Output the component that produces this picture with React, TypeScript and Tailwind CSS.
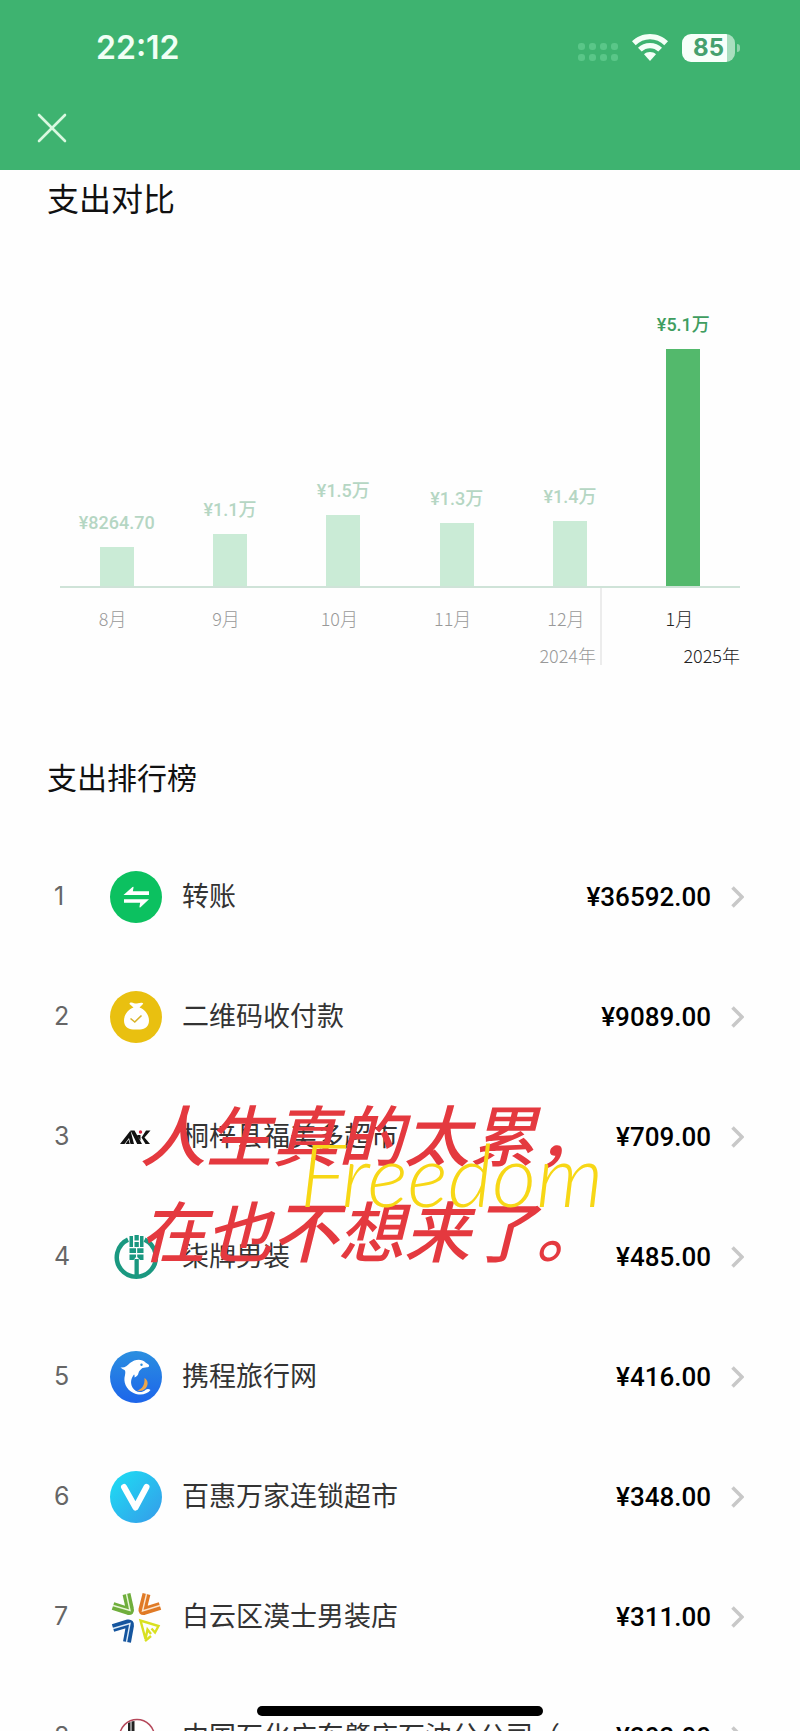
import React from 'react';
import { X } from 'lucide-react';

interface MonthSpend {
  month: string;
  label: string;
  height: number;
  active?: boolean;
}

interface RankItem {
  name: string;
  amount: string;
  icon: React.ReactNode;
}

const MONTHS: MonthSpend[] = [
  { month: '8月', label: '¥8264.70', height: 39 },
  { month: '9月', label: '¥1.1万', height: 52 },
  { month: '10月', label: '¥1.5万', height: 71 },
  { month: '11月', label: '¥1.3万', height: 63 },
  { month: '12月', label: '¥1.4万', height: 65 },
  { month: '1月', label: '¥5.1万', height: 237, active: true },
];

const TransferIcon = () => (
  <svg viewBox="0 0 52 52" className="size-[52px]">
    <circle cx="26" cy="26" r="26" fill="#0cc160" />
    <path d="M13.500 24 22.500 16Q23.800 15.200 23.500 16.800L22.800 20.300H39V24ZM39 28.200 30.500 36.300Q29.200 37 29.500 35.500L30.200 31.800H14V28.200Z" fill="#fff" />
  </svg>
);

const MoneyBagIcon = () => (
  <svg viewBox="0 0 52 52" className="size-[52px]">
    <circle cx="26" cy="26" r="26" fill="#e9c010" />
    <path d="M19.500 13C19.500 11 22.500 11.500 24 12.200Q26 13 28 12.200C30 11.500 34 11.300 33 13L29.500 16.500C35.500 18.500 39 24.500 39 29.500C39 35 35.500 38.500 30 38.500H23C17.500 38.500 14 35 14 29.500C14 24.500 17.500 18.500 23.500 16.500Z" fill="#fff" />
    <path d="M20.500 27.500 24.800 31 31.500 24.500" fill="none" stroke="#d9b32a" strokeWidth="1.600" />
  </svg>
);

const AxkIcon = () => (
  <svg viewBox="0 0 52 52" className="size-[52px]">
    <path d="M10 33 20.500 19.500 24 33H20.500L19 27 14.500 33Z" fill="#111" />
    <path d="M15.500 33 18.500 28.500 19.800 33Z" fill="#111" />
    <path d="M20.500 19.500H24.500L32 33H27.200ZM27.500 24H30.500V29.500L27.500 25ZM36 19.500H40.500L34.500 26.500 40 33H35.500L31.500 26.500Z" fill="#111" />
    <circle cx="30.500" cy="21" r="1.700" fill="#d3263f" />
  </svg>
);

const WheatIcon = () => (
  <svg viewBox="0 0 52 52" className="size-[52px]">
    <path d="M18 8.600A19.500 19.500 0 1 0 34.600 8.600" fill="none" stroke="#1a9880" strokeWidth="4.500" />
    <path d="M19.500 5H23V16H19.500ZM24.500 4H28.800V9.500H24.500ZM30 5H33.500V16H30ZM24.500 11H28.800V16H24.500ZM19.500 17.300H26V22H19.500ZM27.200 17.300H33.500V22H27.200ZM19.500 23.500H26V26L23.500 29H19.500ZM27.200 23.500H33.500V29H30L27.200 26ZM24.500 28H28.800V46H24.500Z" fill="#1a9880" />
  </svg>
);

const DolphinIcon = () => (
  <svg viewBox="0 0 52 52" className="size-[52px]">
    <defs>
      <linearGradient id="sea" x1="0" y1="0" x2="0" y2="1">
        <stop offset="0" stopColor="#2b8fe0" />
        <stop offset="1" stopColor="#1d65ea" />
      </linearGradient>
    </defs>
    <circle cx="26" cy="26" r="26" fill="url(#sea)" />
    <path d="M34.500 27C38.500 29.500 38.500 34 35.500 37.500C33 40 29.500 40.500 27 39.500C32 38.500 35 34 34.500 27Z" fill="#eda64b" />
    <path d="M10.500 16.500C15 17 17 15 20 12C25 7.800 32 7.500 35.500 11.500L38.500 13.500C39.800 14.500 39 16.500 37 16.200L32.500 17C31 18.500 28.800 19.500 28.500 22C28.300 24.500 26.500 25.500 24.500 26.500C24.800 24.800 24.500 23.800 24 23.500C21 27 20 32 22.500 36.500C25 41 31 43 36 38.500Q38.500 37.500 40.500 39C37 43.500 30 45 23.500 42C16 38.500 13 31 15 24C15.500 21.500 15.500 20 14.500 19Q12.500 18 10.500 16.500Z" fill="#fff" />
    <circle cx="31.500" cy="13.800" r="1.200" fill="#2b8fe0" />
  </svg>
);

const VIcon = () => (
  <svg viewBox="0 0 52 52" className="size-[52px]">
    <defs>
      <linearGradient id="cyan" x1="0" y1="0" x2="1" y2="1">
        <stop offset="0.100" stopColor="#1fd9f3" />
        <stop offset="0.900" stopColor="#33a1ea" />
      </linearGradient>
    </defs>
    <circle cx="26" cy="26" r="26" fill="url(#cyan)" />
    <path d="M14 16 25.500 36.500 36.500 16" fill="none" stroke="#fff" strokeWidth="6" strokeLinecap="round" strokeLinejoin="round" />
  </svg>
);

const PinwheelIcon = () => (
  <svg viewBox="0 0 52 52" className="size-[52px]" fill="none">
    <path d="M16.500 3 20 18.500Q20.500 20.500 18.500 20L3 15" stroke="#6fae3c" strokeWidth="8" />
    <path d="M16.500 3 20 19.500 3 14.500" stroke="#e9f7d8" strokeWidth="1.400" />
    <path d="M36.500 3 32.500 18.500Q32 20.500 34 20L50 15" stroke="#e07a26" strokeWidth="8" />
    <path d="M36.500 3 32.500 20 50 14.500" stroke="#fbe6cf" strokeWidth="1.400" />
    <path d="M3 37 18 32.500Q20.500 32 20 34.500L17 51" stroke="#15559e" strokeWidth="8" />
    <path d="M3 37.500 20 32.500 16.500 51" stroke="#dcebf8" strokeWidth="1.400" />
    <path d="M41 43 37.500 38.500 35.500 48 30.500 29.500 48.500 35 45 41.500 41.500 37.500" stroke="#d9e021" strokeWidth="2.400" />
    <path d="M35 50 41 45" stroke="#d9e021" strokeWidth="2.400" />
  </svg>
);

const OilIcon = () => (
  <svg viewBox="0 0 52 52" className="size-[52px]">
    <circle cx="27" cy="26" r="17.500" fill="#fff" stroke="#b5485a" strokeWidth="1.500" />
    <path d="M18 12 20.500 11V40H18ZM21.500 10.500 24.500 10V40H21.500Z" fill="#222" />
    <path d="M26 25.500H41" stroke="#777" strokeWidth="2" strokeDasharray="2 1" />
  </svg>
);

const RANKING: RankItem[] = [
  { name: '转账', amount: '¥36592.00', icon: <TransferIcon /> },
  { name: '二维码收付款', amount: '¥9089.00', icon: <MoneyBagIcon /> },
  { name: '桐梓县福美多超市', amount: '¥709.00', icon: <AxkIcon /> },
  { name: '柒牌男装', amount: '¥485.00', icon: <WheatIcon /> },
  { name: '携程旅行网', amount: '¥416.00', icon: <DolphinIcon /> },
  { name: '百惠万家连锁超市', amount: '¥348.00', icon: <VIcon /> },
  { name: '白云区漠士男装店', amount: '¥311.00', icon: <PinwheelIcon /> },
  { name: '中国石化广东肇庆石油分公司（', amount: '¥303.00', icon: <OilIcon /> },
];

const StatusBar = () => (
  <div className="flex h-24 items-center justify-between pl-24 pr-[60px]">
    <span className="font-['Inter',sans-serif] text-[32px] font-semibold text-[#f1fff5]">22:12</span>
    <div className="flex items-center gap-3.5">
      <div className="grid grid-cols-4 gap-x-1 gap-y-1 pt-2">
        {Array.from({ length: 8 }, (_, i) => (
          <span key={i} className="size-[7px] rounded-[3px] bg-[#5ac688]" />
        ))}
      </div>
      <svg viewBox="0 0 36 28" className="h-7 w-9">
        <path d="M18 0C25 0 31.500 2.800 36 7.300L32.300 11.200C28.500 7.400 23.500 5.300 18 5.300S7.500 7.400 3.700 11.200L0 7.300C4.500 2.800 11 0 18 0Z" fill="#f4fff7" />
        <path d="M18 9C22.700 9 27 10.800 30 13.800L26.300 17.600C24 15.400 21.200 14.200 18 14.200S12 15.400 9.700 17.600L6 13.800C9 10.800 13.300 9 18 9Z" fill="#f4fff7" />
        <path d="M18 18C20.400 18 22.500 18.900 24 20.300L18 27 12 20.300C13.500 18.900 15.600 18 18 18Z" fill="#f4fff7" />
      </svg>
      <div className="flex items-center gap-0.5">
        <div className="flex h-7 w-[53px] items-center justify-center rounded-[9px] bg-linear-to-r from-[#f7fffa] from-85% to-[#a9dfbf] to-85% font-['Inter',sans-serif] text-2xl font-bold text-[#45a06e]">85</div>
        <span className="h-2 w-[3px] rounded-r-full bg-[#8ed3ab]" />
      </div>
    </div>
  </div>
);

const SpendChart = () => (
  <div className="px-[60px] pt-20">
    <div className="grid h-[286px] grid-cols-6 items-end border-b-2 border-[#cfe3d8]">
      {MONTHS.map(m => (
        <div key={m.month} className="flex flex-col items-center">
          <span className={`mb-3 text-lg leading-6 font-medium ${m.active ? 'text-[#3f9d60]' : 'text-[#b5d6c3]'}`}>{m.label}</span>
          <div className={`w-[34px] ${m.active ? 'bg-[#53b96c]' : 'bg-[#caebd6]'}`} style={{ height: m.height }} />
        </div>
      ))}
    </div>
    <div className="grid">
      <div className="col-start-1 row-start-1 grid grid-cols-6 self-start pt-4">
        {MONTHS.map(m => (
          <span key={m.month} className={`pr-2 text-center font-['Noto_Sans_CJK_SC',sans-serif] text-lg leading-7 font-light ${m.active ? 'text-[#222]' : 'text-[#999]'}`}>{m.month}</span>
        ))}
      </div>
      <div className="col-start-1 row-start-1 flex h-[77px] items-end font-['Noto_Sans_CJK_SC',sans-serif] text-lg leading-5 font-light">
        <div className="flex h-full w-[calc(80%-2px)] items-end justify-end border-r-2 border-[#ececec] pr-1 text-[#999]">2024年</div>
        <div className="flex-1 text-right text-[#222]">2025年</div>
      </div>
    </div>
  </div>
);

const RankRow: React.FC<{ item: RankItem; rank: number }> = ({ item, rank }) => (
  <li>
    <button type="button" className="flex h-[120px] w-full items-center pr-14 pl-[54px] text-left">
      <span className="w-14 shrink-0 font-['Inter',sans-serif] text-[25px] text-[#666]">{rank}</span>
      {item.icon}
      <span className="ml-5 flex-1 text-[27px] whitespace-nowrap text-[#333]">{item.name}</span>
      <span className="text-[26px] font-medium text-black">{item.amount}</span>
      <svg viewBox="0 0 13 22" className="ml-5 h-[22px] w-[13px]" fill="none">
        <path d="M1.500 1.500 11 11 1.500 20.500" stroke="#c8c8c8" strokeWidth="3.500" />
      </svg>
    </button>
  </li>
);

export default function App() {
  return (
    <main className="relative h-screen overflow-hidden bg-[#fefefe] font-['Roboto','Noto_Sans_CJK_SC',sans-serif]">
      <header className="h-[170px] bg-[#3eb370]">
        <StatusBar />
        <button type="button" aria-label="关闭" className="mt-3 ml-8 flex size-10 items-center justify-center">
          <X size={52} strokeWidth={1.2} className="shrink-0 text-[#d9f8e0]" />
        </button>
      </header>

      <section>
        <h2 className="px-[47px] pt-2 text-[32px] leading-[44px] text-[#111]">支出对比</h2>
        <SpendChart />
      </section>

      <section className="relative pt-[92px]">
        <h2 className="px-[47px] text-[30px] leading-[44px] text-[#111]">支出排行榜</h2>
        <ol className="pt-9">
          {RANKING.map((item, i) => (
            <RankRow key={item.name} item={item} rank={i + 1} />
          ))}
        </ol>

        {/* handwritten sticker lying over the list */}
        <div className="pointer-events-none absolute top-[426px] left-[140px] whitespace-nowrap">
          <p className="text-[66px] leading-[96px] font-medium text-[#e4393f] italic">
            人生真的太累，<br />在也不想来了。
          </p>
          <p className="absolute top-[36px] left-[160px] font-['Lato',sans-serif] text-[86px] leading-[94px] font-light text-[#f7d716] italic">Freedom</p>
        </div>
      </section>

      <div className="absolute bottom-[15px] left-1/2 h-[10px] w-[286px] -translate-x-1/2 rounded-full bg-black" />
    </main>
  );
}
